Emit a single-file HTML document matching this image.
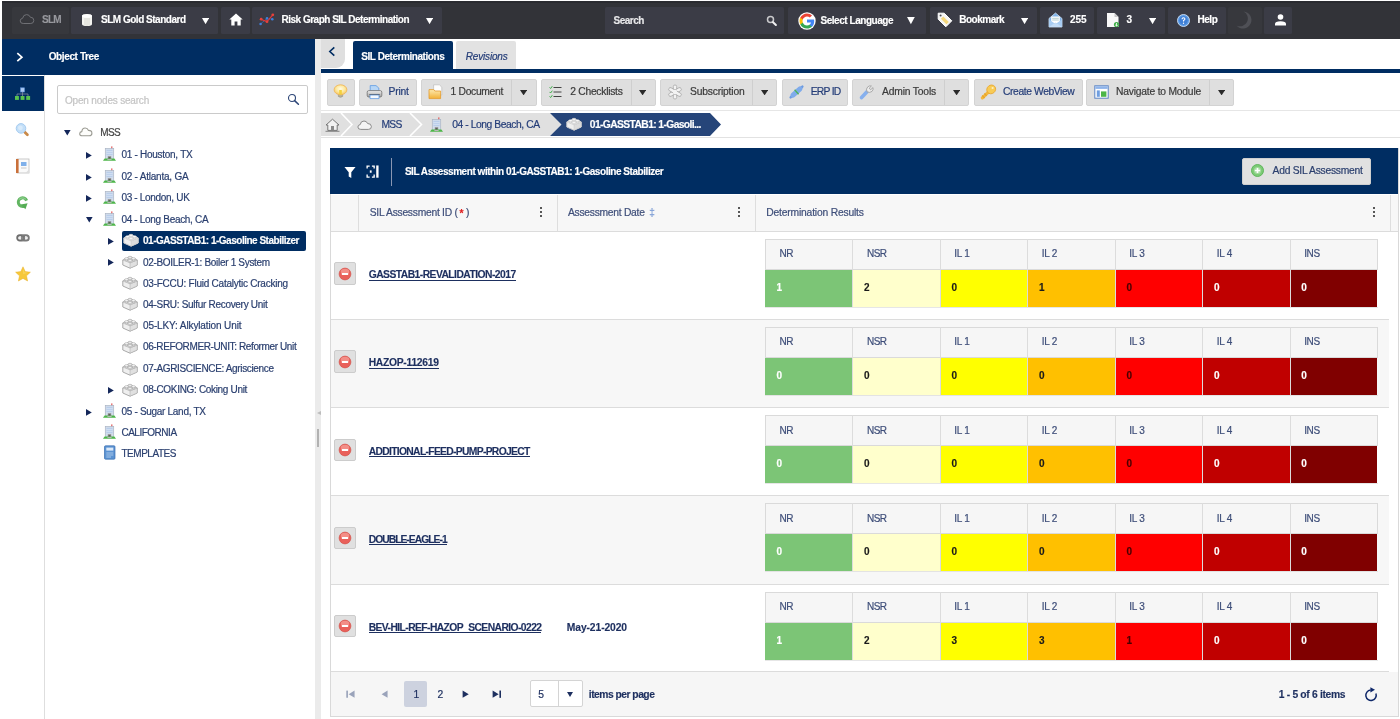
<!DOCTYPE html>
<html lang="en"><head><meta charset="utf-8"><title>SLM - Risk Graph SIL Determination</title>
<style>

*{box-sizing:border-box;margin:0;padding:0}
html,body{width:1400px;height:719px;overflow:hidden;background:#fff}
body{position:relative;font-family:"Liberation Sans",Arial,sans-serif;font-size:10px;color:#1d2f5f;letter-spacing:-0.3px}
.abs{position:absolute}
.t{position:absolute;white-space:nowrap;line-height:16px;height:16px;-webkit-text-stroke:0.2px currentColor}
.t.b{-webkit-text-stroke:0.15px currentColor}
#app{position:absolute;left:0;top:0;width:1400px;height:719px;will-change:transform;transform:translateZ(0)}
.topbar{position:absolute;left:0;top:0;width:1400px;height:39px;background:#323338}
.nb{position:absolute;top:7px;height:27px;background:#3b3c46;border-radius:1.5px}
.tri{position:absolute;width:0;height:0;border-left:4px solid transparent;border-right:4px solid transparent;border-top:6px solid #fff}
.tb{position:absolute;top:79px;height:27px;background:#dfdfdf;border:1px solid #d3d3d3;border-radius:2px}
.tbd{position:absolute;top:80px;height:25px;width:1px;background:#cfcfcf}
.dtri{position:absolute;width:0;height:0;border-left:3.5px solid transparent;border-right:3.5px solid transparent;border-top:5px solid #222}

</style></head>
<body>
<div id="app">
<div class="topbar">
<div class="abs" style="left:0;top:0;width:1400px;height:1px;background:#fff"></div><div class="abs" style="left:0;top:1px;width:1400px;height:1.5px;background:#2a2b30"></div><div class="abs" style="left:0;top:0;width:1.5px;height:39px;background:#fff"></div>
<div class="nb" style="left:12px;width:57px;background:#37383d;"></div>
<svg class="abs" style="left:19px;top:12px" width="17" height="14" viewBox="0 0 17 14"><path d="M4.2 11.5 Q1.2 11.5 1.2 8.9 Q1.2 6.6 3.6 6.3 Q4.2 2.6 7.6 2.6 Q10.4 2.6 11.3 5.2 Q14.8 5.2 14.8 8.4 Q14.8 11.5 11.8 11.5 Z" fill="none" stroke="#6f7075" stroke-width="1"/></svg>
<span class="t b" style="left:42px;top:12.4px;font-size:10px;letter-spacing:-0.703px;font-weight:bold;color:#97989d;">SLM</span>
<div class="nb" style="left:71px;width:147px;"></div>
<svg class="abs" style="left:81px;top:13px" width="12" height="14" viewBox="0 0 12 14"><path d="M1 3 Q1 1 6 1 Q11 1 11 3 V11 Q11 13 6 13 Q1 13 1 11 Z" fill="#f4f4f0"/><ellipse cx="6" cy="3" rx="5" ry="1.8" fill="#ffffff"/><path d="M4 5V12.6M6 5V13M8 5V12.6" stroke="#d0d0c8" stroke-width="0.8"/></svg>
<span class="t b" style="left:101px;top:12.4px;font-size:10px;letter-spacing:-0.487px;font-weight:bold;color:#ffffff;">SLM Gold Standard</span>
<svg class="abs" style="left:201.9px;top:17.5px" width="7.1" height="6.2" viewBox="0 0 7.1 6.2"><path d="M0 0 H7.1 L3.55 6.2 Z" fill="#fff"/></svg>
<div class="nb" style="left:221px;width:29px;"></div>
<svg class="abs" style="left:229px;top:13px" width="14" height="13" viewBox="0 0 14 13"><path d="M7 0.5 L0.3 6.6 H2.3 V12.5 H5.6 V8.5 H8.4 V12.5 H11.7 V6.6 H13.7 Z" fill="#fff"/></svg>
<div class="nb" style="left:252px;width:190px;"></div>
<svg class="abs" style="left:259px;top:13px" width="16" height="13" viewBox="0 0 16 13"><path d="M1.5 11 L8 5.5 L13.5 6.2" fill="none" stroke="#3d7fd9" stroke-width="1" stroke-dasharray="1.5 1.1"/><path d="M0.9 6 L8 8.6 L14 1.6" fill="none" stroke="#e0353a" stroke-width="1.2"/><circle cx="1.6" cy="11" r="1.3" fill="#3d7fd9"/><circle cx="8" cy="5.4" r="1.3" fill="#3d7fd9"/><circle cx="13.3" cy="6.3" r="1.3" fill="#3d7fd9"/><circle cx="2.2" cy="6.2" r="1.4" fill="#e8413a"/><circle cx="8" cy="8.7" r="1.4" fill="#e8413a"/><circle cx="13.8" cy="1.8" r="1.4" fill="#e8413a"/></svg>
<span class="t b" style="left:281.5px;top:12.4px;font-size:10px;letter-spacing:-0.5px;font-weight:bold;color:#ffffff;">Risk Graph SIL Determination</span>
<svg class="abs" style="left:426px;top:17.5px" width="7.1" height="6.2" viewBox="0 0 7.1 6.2"><path d="M0 0 H7.1 L3.55 6.2 Z" fill="#fff"/></svg>
<div class="nb" style="left:605px;width:179px;"></div>
<span class="t b" style="left:613.5px;top:12.8px;font-size:10px;letter-spacing:-0.476px;font-weight:bold;color:#e8e8ea;">Search</span>
<svg class="abs" style="left:766px;top:14.6px" width="12" height="12" viewBox="0 0 12 12"><circle cx="4.5" cy="4.6" r="3" fill="none" stroke="#c9c9cb" stroke-width="1.5"/><path d="M7 7.2 L9.9 10" stroke="#f0f0f0" stroke-width="2" stroke-linecap="round"/></svg>
<div class="nb" style="left:788px;width:138px;"></div>
<svg class="abs" style="left:798px;top:12px" width="18" height="18" viewBox="0 0 18 18"><circle cx="9" cy="9" r="8.7" fill="#fff"/><g transform="translate(9 9) scale(1.28) translate(-9 -9.05)"><path d="M14.6 9.15c0-.42-.04-.82-.1-1.2H9v2.3h3.15c-.14.73-.55 1.35-1.17 1.77v1.47h1.9c1.1-1.02 1.72-2.52 1.72-4.34z" fill="#4285F4"/><path d="M9 14.9c1.58 0 2.9-.52 3.87-1.42l-1.9-1.47c-.52.35-1.2.56-1.97.56-1.52 0-2.8-1.03-3.27-2.4H3.78v1.52C4.74 13.6 6.72 14.9 9 14.9z" fill="#34A853"/><path d="M5.73 10.17c-.12-.35-.18-.73-.18-1.12s.07-.77.18-1.12V6.4H3.78C3.38 7.2 3.15 8.1 3.15 9.05s.23 1.85.63 2.64l1.95-1.52z" fill="#FBBC05"/><path d="M9 5.52c.86 0 1.63.3 2.24.88l1.68-1.68C11.9 3.77 10.58 3.2 9 3.2c-2.28 0-4.26 1.3-5.22 3.2l1.95 1.52C6.2 6.55 7.48 5.52 9 5.52z" fill="#EA4335"/></g></svg>
<span class="t b" style="left:820.5px;top:12.8px;font-size:10px;letter-spacing:-0.464px;font-weight:bold;color:#ffffff;">Select Language</span>
<svg class="abs" style="left:907px;top:17.3px" width="7.8" height="7.3" viewBox="0 0 7.8 7.3"><path d="M0 0 H7.8 L3.9 7.3 Z" fill="#fff"/></svg>
<div class="nb" style="left:930px;width:107px;"></div>
<svg class="abs" style="left:937px;top:11.5px" width="16" height="16" viewBox="0 0 16 16"><path d="M1.2 1.2 H7.2 L14.8 8.8 L8.8 14.8 L1.2 7.2 Z" fill="#f6f6f4" stroke="#ffffff" stroke-width="1" stroke-linejoin="round"/><path d="M6.3 4.4 L11.8 9.9 L9.4 12.3 L3.9 6.8 Z" fill="#f4d77c"/><circle cx="3.6" cy="3.6" r="1" fill="#4a4b52"/></svg>
<span class="t b" style="left:959.2px;top:12.4px;font-size:10px;letter-spacing:-0.488px;font-weight:bold;color:#ffffff;">Bookmark</span>
<svg class="abs" style="left:1021.3px;top:17.5px" width="7.1" height="6.2" viewBox="0 0 7.1 6.2"><path d="M0 0 H7.1 L3.55 6.2 Z" fill="#fff"/></svg>
<div class="nb" style="left:1040px;width:54px;"></div>
<svg class="abs" style="left:1048px;top:12px" width="15" height="16" viewBox="0 0 15 16"><path d="M1 6.5 L7.5 1 L14 6.5 V15 H1 Z" fill="#7fb2e8" stroke="#cfe3f8" stroke-width="0.8"/><rect x="3.2" y="4.5" width="8.6" height="6.5" fill="#fff"/><path d="M4.2 6.3H10.8M4.2 8H10.8" stroke="#9bb" stroke-width="0.7"/><path d="M1 7.5 L7.5 12 L14 7.5 V15 H1 Z" fill="#a9cdf3"/><path d="M1 15 L7.5 10.5 L14 15" fill="#c3dcf7"/></svg>
<span class="t b" style="left:1070px;top:12.4px;font-size:10px;letter-spacing:-0.061px;font-weight:bold;color:#ffffff;">255</span>
<div class="nb" style="left:1097px;width:68px;"></div>
<svg class="abs" style="left:1106px;top:12px" width="14" height="16" viewBox="0 0 14 16"><path d="M1 1 H8.5 L12.5 5 V15 H1 Z" fill="#f8f8f8"/><path d="M8.5 1 V5 H12.5 Z" fill="#c8c8c8"/><circle cx="10.5" cy="12.5" r="2.6" fill="#3fae49"/><path d="M10.5 11V14M9.2 12.8 L10.5 14.1 L11.8 12.8" stroke="#fff" stroke-width="0.8" fill="none"/></svg>
<span class="t b" style="left:1126.5px;top:12.4px;font-size:10px;font-weight:bold;color:#ffffff;">3</span>
<svg class="abs" style="left:1148.8px;top:17.5px" width="7.1" height="6.2" viewBox="0 0 7.1 6.2"><path d="M0 0 H7.1 L3.55 6.2 Z" fill="#fff"/></svg>
<div class="nb" style="left:1168px;width:58px;"></div>
<svg class="abs" style="left:1177px;top:13.5px" width="13" height="13" viewBox="0 0 13 13"><circle cx="6.5" cy="6.5" r="6" fill="#5b9be6" stroke="#cfe2f8" stroke-width="0.9"/><circle cx="6.5" cy="6.5" r="4.2" fill="#3f7fd6"/><path d="M5.1 5.3 Q5.1 3.7 6.5 3.7 Q7.9 3.7 7.9 5 Q7.9 5.8 6.5 6.6 V7.5" fill="none" stroke="#fff" stroke-width="1.1"/><circle cx="6.5" cy="9.2" r="0.7" fill="#fff"/></svg>
<span class="t b" style="left:1197.5px;top:12.4px;font-size:10px;letter-spacing:-0.467px;font-weight:bold;color:#ffffff;">Help</span>
<div class="nb" style="left:1228px;width:34px;background:#37383d;"></div>
<svg class="abs" style="left:1234px;top:10px" width="20" height="20" viewBox="0 0 20 20"><path d="M9.5 1.5 A8.5 8.5 0 1 1 2.5 15.5 A7.5 7.5 0 0 0 9.5 1.5 Z" fill="#4f5056"/></svg>
<div class="nb" style="left:1264px;width:28px;"></div>
<svg class="abs" style="left:1274px;top:14px" width="13" height="12" viewBox="0 0 13 12"><circle cx="6.5" cy="3" r="2.8" fill="#fff"/><path d="M1 11.5 V9.8 Q1 7.3 6.5 7.3 Q12 7.3 12 9.8 V11.5 Z" fill="#fff"/></svg>
</div>
<div class="abs" style="left:0;top:39px;width:315px;height:35.5px;background:#002d62"></div>
<svg class="abs" style="left:15.6px;top:52px" width="8" height="11" viewBox="0 0 8 11"><path d="M1.3 1.2 L5.9 5.2 L1.3 9.2" fill="none" stroke="#fff" stroke-width="1.7"/></svg>
<span class="t b" style="left:48.7px;top:49px;font-size:10px;letter-spacing:-0.379px;font-weight:bold;color:#fff;">Object Tree</span>
<div class="abs" style="left:44px;top:75px;width:1px;height:644px;background:#dedede"></div>
<div class="abs" style="left:1.5px;top:76.2px;width:42.5px;height:35.3px;background:#002d62"></div>
<div class="abs" style="left:315px;top:39px;width:6px;height:680px;background:#ebebeb"></div>
<div class="abs" style="left:317px;top:429px;width:2px;height:18px;background:#b2b2b2"></div>
<div class="abs" style="left:316.5px;top:411.4px;width:0;height:0;border-top:2.5px solid transparent;border-bottom:2.5px solid transparent;border-right:4px solid #bdbdbd"></div>
<div class="abs" style="left:57px;top:85px;width:250.5px;height:29px;border:1px solid #cacaca;border-radius:2px;background:#fff"></div>
<span class="t" style="left:65px;top:92.5px;font-size:10px;letter-spacing:-0.193px;color:#c4c4c4;">Open nodes search</span>
<svg class="abs" style="left:287.3px;top:92.5px" width="13" height="13" viewBox="0 0 13 13"><circle cx="5" cy="5" r="3.5" fill="none" stroke="#2d4677" stroke-width="1.1"/><path d="M7.6 7.6 L11.4 11.3" stroke="#2d4677" stroke-width="1.5" stroke-linecap="round"/></svg>
<svg class="abs" style="left:14px;top:87px" width="17" height="14" viewBox="0 0 17 14"><rect x="6.5" y="0.8" width="4" height="4.2" fill="#a9c8f2" stroke="#5d8fd8" stroke-width="0.6"/><path d="M8.5 5V7M3 9V7H14V9M8.5 7V9" stroke="#8d93a6" stroke-width="0.7" fill="none"/><rect x="1" y="9" width="3.9" height="3.9" fill="#58c24f"/><rect x="6.6" y="9" width="3.9" height="3.9" fill="#58c24f"/><rect x="12.2" y="9" width="3.9" height="3.9" fill="#58c24f"/></svg>
<svg class="abs" style="left:15px;top:122px" width="15" height="15" viewBox="0 0 15 15"><path d="M9.6 10 L12.4 12.8" stroke="#c98a4a" stroke-width="2.8" stroke-linecap="round"/><circle cx="6" cy="6.4" r="4.8" fill="#c3dff8" stroke="#a5cbf0" stroke-width="1"/><circle cx="5.4" cy="5.8" r="2.4" fill="#d9ebfb"/></svg>
<svg class="abs" style="left:15px;top:158px" width="15" height="16" viewBox="0 0 15 16"><rect x="2" y="1" width="12" height="14" fill="#fafafa" stroke="#bdbdbd" stroke-width="0.8"/><rect x="1" y="1" width="2.6" height="14" fill="#c9703a"/><rect x="6" y="4" width="5.5" height="4" fill="#7fb0ea"/><path d="M6 10H11.5" stroke="#bbb" stroke-width="0.8"/><path d="M10.5 15 L14 11.5 V15Z" fill="#ddd"/></svg>
<svg class="abs" style="left:15px;top:195px" width="15" height="15" viewBox="0 0 15 15"><path d="M11.6 5.6 A4.3 4.3 0 1 0 9.2 11.2" fill="none" stroke="#62b562" stroke-width="3.1"/><path d="M5.8 9.4 L10.4 14.2 L12.6 8.2 Z" fill="#55ad55"/><path d="M10.8 4.4 A4.3 4.3 0 0 0 4 4.6" fill="none" stroke="#8ccf8c" stroke-width="1.2"/></svg>
<svg class="abs" style="left:15.6px;top:232.5px" width="14" height="10" viewBox="0 0 14 10"><rect x="1.2" y="2.3" width="7" height="5.2" rx="2.6" fill="none" stroke="#6e6e6e" stroke-width="1.9"/><rect x="5.8" y="2.3" width="7" height="5.2" rx="2.6" fill="none" stroke="#7a7a7a" stroke-width="1.9"/><path d="M3 4.9H5.4M8.6 4.9H11" stroke="#d8d8d8" stroke-width="0.8"/></svg>
<svg class="abs" style="left:14.8px;top:265.6px" width="16" height="16" viewBox="0 0 16 16"><path d="M8 0.8 L10.2 5.6 L15.4 6.2 L11.5 9.8 L12.6 15 L8 12.4 L3.4 15 L4.5 9.8 L0.6 6.2 L5.8 5.6 Z" fill="#f6c83a" stroke="#e9b02a" stroke-width="0.5"/><path d="M8 2.6 L9.5 6.3 L13 6.8 L8 8.2 Z" fill="#f9d765" opacity="0.7"/></svg>
<svg class="abs" style="left:64px;top:130.4px" width="7" height="6" viewBox="0 0 7 6"><path d="M0 0 H6.6 L3.3 5.6 Z" fill="#14275a"/></svg>
<svg class="abs" style="left:79.4px;top:127.4px" width="14" height="10" viewBox="0 0 14 10"><path d="M3.3 8.8 Q0.7 8.8 0.7 6.7 Q0.7 4.9 2.8 4.6 Q3.2 1 6.2 1 Q8.6 1 9.4 3.4 Q12.9 3.3 12.9 6.2 Q12.9 8.8 10.2 8.8 Z" fill="#fdfdfb" stroke="#9b9b93" stroke-width="1.1"/></svg>
<span class="t" style="left:100.2px;top:125px;font-size:10px;letter-spacing:-0.623px;color:#444;">MSS</span>
<svg class="abs" style="left:86px;top:151.89999999999998px" width="6" height="7" viewBox="0 0 6 7"><path d="M0 0 V6.8 L5.8 3.4 Z" fill="#14275a"/></svg>
<svg class="abs" style="left:103px;top:146.2px" width="13" height="15" viewBox="0 0 13 15"><rect x="8.2" y="0.4" width="1.2" height="2.4" fill="#e25a5a"/><rect x="2.3" y="2.6" width="8.4" height="11" fill="#d3deec" stroke="#a9b4c4" stroke-width="0.7"/><rect x="3.4" y="3.8" width="6.2" height="5.4" fill="#b9cdea"/><path d="M3.4 5.6H9.6M3.4 7.4H9.6" stroke="#e4ecf7" stroke-width="0.6"/><rect x="4.8" y="10.2" width="3.4" height="3.2" fill="#8d8d8d"/><rect x="5.6" y="11" width="1.8" height="2.4" fill="#5f5f5f"/><path d="M0 14.8 L1.6 12.4 H11.4 L13 14.8 Z" fill="#4cb648"/><rect x="4.4" y="12.9" width="4.2" height="1.2" fill="#b8b8b8"/></svg>
<span class="t" style="left:121.4px;top:147.2px;font-size:10px;letter-spacing:-0.275px;color:#2a3f6f;">01 - Houston, TX</span>
<svg class="abs" style="left:86px;top:173.7px" width="6" height="7" viewBox="0 0 6 7"><path d="M0 0 V6.8 L5.8 3.4 Z" fill="#14275a"/></svg>
<svg class="abs" style="left:103px;top:168px" width="13" height="15" viewBox="0 0 13 15"><rect x="8.2" y="0.4" width="1.2" height="2.4" fill="#e25a5a"/><rect x="2.3" y="2.6" width="8.4" height="11" fill="#d3deec" stroke="#a9b4c4" stroke-width="0.7"/><rect x="3.4" y="3.8" width="6.2" height="5.4" fill="#b9cdea"/><path d="M3.4 5.6H9.6M3.4 7.4H9.6" stroke="#e4ecf7" stroke-width="0.6"/><rect x="4.8" y="10.2" width="3.4" height="3.2" fill="#8d8d8d"/><rect x="5.6" y="11" width="1.8" height="2.4" fill="#5f5f5f"/><path d="M0 14.8 L1.6 12.4 H11.4 L13 14.8 Z" fill="#4cb648"/><rect x="4.4" y="12.9" width="4.2" height="1.2" fill="#b8b8b8"/></svg>
<span class="t" style="left:121.4px;top:169px;font-size:10px;letter-spacing:-0.225px;color:#2a3f6f;">02 - Atlanta, GA</span>
<svg class="abs" style="left:86px;top:194.79999999999998px" width="6" height="7" viewBox="0 0 6 7"><path d="M0 0 V6.8 L5.8 3.4 Z" fill="#14275a"/></svg>
<svg class="abs" style="left:103px;top:189.1px" width="13" height="15" viewBox="0 0 13 15"><rect x="8.2" y="0.4" width="1.2" height="2.4" fill="#e25a5a"/><rect x="2.3" y="2.6" width="8.4" height="11" fill="#d3deec" stroke="#a9b4c4" stroke-width="0.7"/><rect x="3.4" y="3.8" width="6.2" height="5.4" fill="#b9cdea"/><path d="M3.4 5.6H9.6M3.4 7.4H9.6" stroke="#e4ecf7" stroke-width="0.6"/><rect x="4.8" y="10.2" width="3.4" height="3.2" fill="#8d8d8d"/><rect x="5.6" y="11" width="1.8" height="2.4" fill="#5f5f5f"/><path d="M0 14.8 L1.6 12.4 H11.4 L13 14.8 Z" fill="#4cb648"/><rect x="4.4" y="12.9" width="4.2" height="1.2" fill="#b8b8b8"/></svg>
<span class="t" style="left:121.4px;top:190.1px;font-size:10px;letter-spacing:-0.315px;color:#2a3f6f;">03 - London, UK</span>
<svg class="abs" style="left:86px;top:217.20000000000002px" width="7" height="6" viewBox="0 0 7 6"><path d="M0 0 H6.6 L3.3 5.6 Z" fill="#14275a"/></svg>
<svg class="abs" style="left:103px;top:210.8px" width="13" height="15" viewBox="0 0 13 15"><rect x="8.2" y="0.4" width="1.2" height="2.4" fill="#e25a5a"/><rect x="2.3" y="2.6" width="8.4" height="11" fill="#d3deec" stroke="#a9b4c4" stroke-width="0.7"/><rect x="3.4" y="3.8" width="6.2" height="5.4" fill="#b9cdea"/><path d="M3.4 5.6H9.6M3.4 7.4H9.6" stroke="#e4ecf7" stroke-width="0.6"/><rect x="4.8" y="10.2" width="3.4" height="3.2" fill="#8d8d8d"/><rect x="5.6" y="11" width="1.8" height="2.4" fill="#5f5f5f"/><path d="M0 14.8 L1.6 12.4 H11.4 L13 14.8 Z" fill="#4cb648"/><rect x="4.4" y="12.9" width="4.2" height="1.2" fill="#b8b8b8"/></svg>
<span class="t" style="left:121.4px;top:211.8px;font-size:10px;letter-spacing:-0.312px;color:#2a3f6f;">04 - Long Beach, CA</span>
<div class="abs" style="left:122px;top:230.5px;width:184px;height:20.5px;background:#002d62;border-radius:2px"></div>
<svg class="abs" style="left:108px;top:237.6px" width="6" height="7" viewBox="0 0 6 7"><path d="M0 0 V6.8 L5.8 3.4 Z" fill="#14275a"/></svg>
<svg class="abs" style="left:123.3px;top:233.3px" width="16" height="14" viewBox="0 0 16 14"><path d="M0.8 5 L8 2.2 L15.2 5 V10 L8 13.2 L0.8 10 Z" fill="#efefef" stroke="#c9c9c9" stroke-width="1" stroke-linejoin="round"/><path d="M8 7.8 V13.2 L15.2 10 V5 Z" fill="#dcdcdc" stroke="#c9c9c9" stroke-width="0.5"/><path d="M0.8 5 L8 2.2 L15.2 5 L8 7.8 Z" fill="#ffffff" stroke="#c9c9c9" stroke-width="0.6"/><path d="M6 2.3 V3.4 A2 1 0 0 0 10 3.4 V2.3 Z" fill="#efefef" stroke="#c9c9c9" stroke-width="0.7"/><ellipse cx="8" cy="2.3" rx="2" ry="1" fill="#ffffff" stroke="#c9c9c9" stroke-width="0.7"/><path d="M2.5999999999999996 3.7 V4.800000000000001 A2 1 0 0 0 6.6 4.800000000000001 V3.7 Z" fill="#efefef" stroke="#c9c9c9" stroke-width="0.7"/><ellipse cx="4.6" cy="3.7" rx="2" ry="1" fill="#ffffff" stroke="#c9c9c9" stroke-width="0.7"/><path d="M9.4 3.7 V4.800000000000001 A2 1 0 0 0 13.4 4.800000000000001 V3.7 Z" fill="#efefef" stroke="#c9c9c9" stroke-width="0.7"/><ellipse cx="11.4" cy="3.7" rx="2" ry="1" fill="#ffffff" stroke="#c9c9c9" stroke-width="0.7"/><path d="M6 5.3 V6.4 A2 1 0 0 0 10 6.4 V5.3 Z" fill="#efefef" stroke="#c9c9c9" stroke-width="0.7"/><ellipse cx="8" cy="5.3" rx="2" ry="1" fill="#ffffff" stroke="#c9c9c9" stroke-width="0.7"/></svg>
<span class="t b" style="left:143px;top:232.9px;font-size:10px;letter-spacing:-0.489px;font-weight:bold;color:#fff;">01-GASSTAB1: 1-Gasoline Stabilizer</span>
<svg class="abs" style="left:108px;top:259.2px" width="6" height="7" viewBox="0 0 6 7"><path d="M0 0 V6.8 L5.8 3.4 Z" fill="#14275a"/></svg>
<svg class="abs" style="left:122.3px;top:254.9px" width="16" height="14" viewBox="0 0 16 14"><path d="M0.8 5 L8 2.2 L15.2 5 V10 L8 13.2 L0.8 10 Z" fill="#efefef" stroke="#a9a9a9" stroke-width="1" stroke-linejoin="round"/><path d="M8 7.8 V13.2 L15.2 10 V5 Z" fill="#e0e0e0" stroke="#a9a9a9" stroke-width="0.5"/><path d="M0.8 5 L8 2.2 L15.2 5 L8 7.8 Z" fill="#fbfbfb" stroke="#a9a9a9" stroke-width="0.6"/><path d="M6 2.3 V3.4 A2 1 0 0 0 10 3.4 V2.3 Z" fill="#efefef" stroke="#a9a9a9" stroke-width="0.7"/><ellipse cx="8" cy="2.3" rx="2" ry="1" fill="#fbfbfb" stroke="#a9a9a9" stroke-width="0.7"/><path d="M2.5999999999999996 3.7 V4.800000000000001 A2 1 0 0 0 6.6 4.800000000000001 V3.7 Z" fill="#efefef" stroke="#a9a9a9" stroke-width="0.7"/><ellipse cx="4.6" cy="3.7" rx="2" ry="1" fill="#fbfbfb" stroke="#a9a9a9" stroke-width="0.7"/><path d="M9.4 3.7 V4.800000000000001 A2 1 0 0 0 13.4 4.800000000000001 V3.7 Z" fill="#efefef" stroke="#a9a9a9" stroke-width="0.7"/><ellipse cx="11.4" cy="3.7" rx="2" ry="1" fill="#fbfbfb" stroke="#a9a9a9" stroke-width="0.7"/><path d="M6 5.3 V6.4 A2 1 0 0 0 10 6.4 V5.3 Z" fill="#efefef" stroke="#a9a9a9" stroke-width="0.7"/><ellipse cx="8" cy="5.3" rx="2" ry="1" fill="#fbfbfb" stroke="#a9a9a9" stroke-width="0.7"/></svg>
<span class="t" style="left:143px;top:254.5px;font-size:10px;letter-spacing:-0.314px;color:#2a3f6f;">02-BOILER-1: Boiler 1 System</span>
<svg class="abs" style="left:122.3px;top:275.9px" width="16" height="14" viewBox="0 0 16 14"><path d="M0.8 5 L8 2.2 L15.2 5 V10 L8 13.2 L0.8 10 Z" fill="#efefef" stroke="#a9a9a9" stroke-width="1" stroke-linejoin="round"/><path d="M8 7.8 V13.2 L15.2 10 V5 Z" fill="#e0e0e0" stroke="#a9a9a9" stroke-width="0.5"/><path d="M0.8 5 L8 2.2 L15.2 5 L8 7.8 Z" fill="#fbfbfb" stroke="#a9a9a9" stroke-width="0.6"/><path d="M6 2.3 V3.4 A2 1 0 0 0 10 3.4 V2.3 Z" fill="#efefef" stroke="#a9a9a9" stroke-width="0.7"/><ellipse cx="8" cy="2.3" rx="2" ry="1" fill="#fbfbfb" stroke="#a9a9a9" stroke-width="0.7"/><path d="M2.5999999999999996 3.7 V4.800000000000001 A2 1 0 0 0 6.6 4.800000000000001 V3.7 Z" fill="#efefef" stroke="#a9a9a9" stroke-width="0.7"/><ellipse cx="4.6" cy="3.7" rx="2" ry="1" fill="#fbfbfb" stroke="#a9a9a9" stroke-width="0.7"/><path d="M9.4 3.7 V4.800000000000001 A2 1 0 0 0 13.4 4.800000000000001 V3.7 Z" fill="#efefef" stroke="#a9a9a9" stroke-width="0.7"/><ellipse cx="11.4" cy="3.7" rx="2" ry="1" fill="#fbfbfb" stroke="#a9a9a9" stroke-width="0.7"/><path d="M6 5.3 V6.4 A2 1 0 0 0 10 6.4 V5.3 Z" fill="#efefef" stroke="#a9a9a9" stroke-width="0.7"/><ellipse cx="8" cy="5.3" rx="2" ry="1" fill="#fbfbfb" stroke="#a9a9a9" stroke-width="0.7"/></svg>
<span class="t" style="left:143px;top:275.5px;font-size:10px;letter-spacing:-0.243px;color:#2a3f6f;">03-FCCU: Fluid Catalytic Cracking</span>
<svg class="abs" style="left:122.3px;top:297.4px" width="16" height="14" viewBox="0 0 16 14"><path d="M0.8 5 L8 2.2 L15.2 5 V10 L8 13.2 L0.8 10 Z" fill="#efefef" stroke="#a9a9a9" stroke-width="1" stroke-linejoin="round"/><path d="M8 7.8 V13.2 L15.2 10 V5 Z" fill="#e0e0e0" stroke="#a9a9a9" stroke-width="0.5"/><path d="M0.8 5 L8 2.2 L15.2 5 L8 7.8 Z" fill="#fbfbfb" stroke="#a9a9a9" stroke-width="0.6"/><path d="M6 2.3 V3.4 A2 1 0 0 0 10 3.4 V2.3 Z" fill="#efefef" stroke="#a9a9a9" stroke-width="0.7"/><ellipse cx="8" cy="2.3" rx="2" ry="1" fill="#fbfbfb" stroke="#a9a9a9" stroke-width="0.7"/><path d="M2.5999999999999996 3.7 V4.800000000000001 A2 1 0 0 0 6.6 4.800000000000001 V3.7 Z" fill="#efefef" stroke="#a9a9a9" stroke-width="0.7"/><ellipse cx="4.6" cy="3.7" rx="2" ry="1" fill="#fbfbfb" stroke="#a9a9a9" stroke-width="0.7"/><path d="M9.4 3.7 V4.800000000000001 A2 1 0 0 0 13.4 4.800000000000001 V3.7 Z" fill="#efefef" stroke="#a9a9a9" stroke-width="0.7"/><ellipse cx="11.4" cy="3.7" rx="2" ry="1" fill="#fbfbfb" stroke="#a9a9a9" stroke-width="0.7"/><path d="M6 5.3 V6.4 A2 1 0 0 0 10 6.4 V5.3 Z" fill="#efefef" stroke="#a9a9a9" stroke-width="0.7"/><ellipse cx="8" cy="5.3" rx="2" ry="1" fill="#fbfbfb" stroke="#a9a9a9" stroke-width="0.7"/></svg>
<span class="t" style="left:143px;top:297px;font-size:10px;letter-spacing:-0.301px;color:#2a3f6f;">04-SRU: Sulfur Recovery Unit</span>
<svg class="abs" style="left:122.3px;top:318.4px" width="16" height="14" viewBox="0 0 16 14"><path d="M0.8 5 L8 2.2 L15.2 5 V10 L8 13.2 L0.8 10 Z" fill="#efefef" stroke="#a9a9a9" stroke-width="1" stroke-linejoin="round"/><path d="M8 7.8 V13.2 L15.2 10 V5 Z" fill="#e0e0e0" stroke="#a9a9a9" stroke-width="0.5"/><path d="M0.8 5 L8 2.2 L15.2 5 L8 7.8 Z" fill="#fbfbfb" stroke="#a9a9a9" stroke-width="0.6"/><path d="M6 2.3 V3.4 A2 1 0 0 0 10 3.4 V2.3 Z" fill="#efefef" stroke="#a9a9a9" stroke-width="0.7"/><ellipse cx="8" cy="2.3" rx="2" ry="1" fill="#fbfbfb" stroke="#a9a9a9" stroke-width="0.7"/><path d="M2.5999999999999996 3.7 V4.800000000000001 A2 1 0 0 0 6.6 4.800000000000001 V3.7 Z" fill="#efefef" stroke="#a9a9a9" stroke-width="0.7"/><ellipse cx="4.6" cy="3.7" rx="2" ry="1" fill="#fbfbfb" stroke="#a9a9a9" stroke-width="0.7"/><path d="M9.4 3.7 V4.800000000000001 A2 1 0 0 0 13.4 4.800000000000001 V3.7 Z" fill="#efefef" stroke="#a9a9a9" stroke-width="0.7"/><ellipse cx="11.4" cy="3.7" rx="2" ry="1" fill="#fbfbfb" stroke="#a9a9a9" stroke-width="0.7"/><path d="M6 5.3 V6.4 A2 1 0 0 0 10 6.4 V5.3 Z" fill="#efefef" stroke="#a9a9a9" stroke-width="0.7"/><ellipse cx="8" cy="5.3" rx="2" ry="1" fill="#fbfbfb" stroke="#a9a9a9" stroke-width="0.7"/></svg>
<span class="t" style="left:143px;top:318px;font-size:10px;letter-spacing:-0.12px;color:#2a3f6f;">05-LKY: Alkylation Unit</span>
<svg class="abs" style="left:122.3px;top:339.7px" width="16" height="14" viewBox="0 0 16 14"><path d="M0.8 5 L8 2.2 L15.2 5 V10 L8 13.2 L0.8 10 Z" fill="#efefef" stroke="#a9a9a9" stroke-width="1" stroke-linejoin="round"/><path d="M8 7.8 V13.2 L15.2 10 V5 Z" fill="#e0e0e0" stroke="#a9a9a9" stroke-width="0.5"/><path d="M0.8 5 L8 2.2 L15.2 5 L8 7.8 Z" fill="#fbfbfb" stroke="#a9a9a9" stroke-width="0.6"/><path d="M6 2.3 V3.4 A2 1 0 0 0 10 3.4 V2.3 Z" fill="#efefef" stroke="#a9a9a9" stroke-width="0.7"/><ellipse cx="8" cy="2.3" rx="2" ry="1" fill="#fbfbfb" stroke="#a9a9a9" stroke-width="0.7"/><path d="M2.5999999999999996 3.7 V4.800000000000001 A2 1 0 0 0 6.6 4.800000000000001 V3.7 Z" fill="#efefef" stroke="#a9a9a9" stroke-width="0.7"/><ellipse cx="4.6" cy="3.7" rx="2" ry="1" fill="#fbfbfb" stroke="#a9a9a9" stroke-width="0.7"/><path d="M9.4 3.7 V4.800000000000001 A2 1 0 0 0 13.4 4.800000000000001 V3.7 Z" fill="#efefef" stroke="#a9a9a9" stroke-width="0.7"/><ellipse cx="11.4" cy="3.7" rx="2" ry="1" fill="#fbfbfb" stroke="#a9a9a9" stroke-width="0.7"/><path d="M6 5.3 V6.4 A2 1 0 0 0 10 6.4 V5.3 Z" fill="#efefef" stroke="#a9a9a9" stroke-width="0.7"/><ellipse cx="8" cy="5.3" rx="2" ry="1" fill="#fbfbfb" stroke="#a9a9a9" stroke-width="0.7"/></svg>
<span class="t" style="left:143px;top:339.3px;font-size:10px;letter-spacing:-0.378px;color:#2a3f6f;">06-REFORMER-UNIT: Reformer Unit</span>
<svg class="abs" style="left:122.3px;top:361.59999999999997px" width="16" height="14" viewBox="0 0 16 14"><path d="M0.8 5 L8 2.2 L15.2 5 V10 L8 13.2 L0.8 10 Z" fill="#efefef" stroke="#a9a9a9" stroke-width="1" stroke-linejoin="round"/><path d="M8 7.8 V13.2 L15.2 10 V5 Z" fill="#e0e0e0" stroke="#a9a9a9" stroke-width="0.5"/><path d="M0.8 5 L8 2.2 L15.2 5 L8 7.8 Z" fill="#fbfbfb" stroke="#a9a9a9" stroke-width="0.6"/><path d="M6 2.3 V3.4 A2 1 0 0 0 10 3.4 V2.3 Z" fill="#efefef" stroke="#a9a9a9" stroke-width="0.7"/><ellipse cx="8" cy="2.3" rx="2" ry="1" fill="#fbfbfb" stroke="#a9a9a9" stroke-width="0.7"/><path d="M2.5999999999999996 3.7 V4.800000000000001 A2 1 0 0 0 6.6 4.800000000000001 V3.7 Z" fill="#efefef" stroke="#a9a9a9" stroke-width="0.7"/><ellipse cx="4.6" cy="3.7" rx="2" ry="1" fill="#fbfbfb" stroke="#a9a9a9" stroke-width="0.7"/><path d="M9.4 3.7 V4.800000000000001 A2 1 0 0 0 13.4 4.800000000000001 V3.7 Z" fill="#efefef" stroke="#a9a9a9" stroke-width="0.7"/><ellipse cx="11.4" cy="3.7" rx="2" ry="1" fill="#fbfbfb" stroke="#a9a9a9" stroke-width="0.7"/><path d="M6 5.3 V6.4 A2 1 0 0 0 10 6.4 V5.3 Z" fill="#efefef" stroke="#a9a9a9" stroke-width="0.7"/><ellipse cx="8" cy="5.3" rx="2" ry="1" fill="#fbfbfb" stroke="#a9a9a9" stroke-width="0.7"/></svg>
<span class="t" style="left:143px;top:361.2px;font-size:10px;letter-spacing:-0.35px;color:#2a3f6f;">07-AGRISCIENCE: Agriscience</span>
<svg class="abs" style="left:108px;top:386.9px" width="6" height="7" viewBox="0 0 6 7"><path d="M0 0 V6.8 L5.8 3.4 Z" fill="#14275a"/></svg>
<svg class="abs" style="left:122.3px;top:382.59999999999997px" width="16" height="14" viewBox="0 0 16 14"><path d="M0.8 5 L8 2.2 L15.2 5 V10 L8 13.2 L0.8 10 Z" fill="#efefef" stroke="#a9a9a9" stroke-width="1" stroke-linejoin="round"/><path d="M8 7.8 V13.2 L15.2 10 V5 Z" fill="#e0e0e0" stroke="#a9a9a9" stroke-width="0.5"/><path d="M0.8 5 L8 2.2 L15.2 5 L8 7.8 Z" fill="#fbfbfb" stroke="#a9a9a9" stroke-width="0.6"/><path d="M6 2.3 V3.4 A2 1 0 0 0 10 3.4 V2.3 Z" fill="#efefef" stroke="#a9a9a9" stroke-width="0.7"/><ellipse cx="8" cy="2.3" rx="2" ry="1" fill="#fbfbfb" stroke="#a9a9a9" stroke-width="0.7"/><path d="M2.5999999999999996 3.7 V4.800000000000001 A2 1 0 0 0 6.6 4.800000000000001 V3.7 Z" fill="#efefef" stroke="#a9a9a9" stroke-width="0.7"/><ellipse cx="4.6" cy="3.7" rx="2" ry="1" fill="#fbfbfb" stroke="#a9a9a9" stroke-width="0.7"/><path d="M9.4 3.7 V4.800000000000001 A2 1 0 0 0 13.4 4.800000000000001 V3.7 Z" fill="#efefef" stroke="#a9a9a9" stroke-width="0.7"/><ellipse cx="11.4" cy="3.7" rx="2" ry="1" fill="#fbfbfb" stroke="#a9a9a9" stroke-width="0.7"/><path d="M6 5.3 V6.4 A2 1 0 0 0 10 6.4 V5.3 Z" fill="#efefef" stroke="#a9a9a9" stroke-width="0.7"/><ellipse cx="8" cy="5.3" rx="2" ry="1" fill="#fbfbfb" stroke="#a9a9a9" stroke-width="0.7"/></svg>
<span class="t" style="left:143px;top:382.2px;font-size:10px;letter-spacing:-0.325px;color:#2a3f6f;">08-COKING: Coking Unit</span>
<svg class="abs" style="left:86px;top:408.9px" width="6" height="7" viewBox="0 0 6 7"><path d="M0 0 V6.8 L5.8 3.4 Z" fill="#14275a"/></svg>
<svg class="abs" style="left:103px;top:403.2px" width="13" height="15" viewBox="0 0 13 15"><rect x="8.2" y="0.4" width="1.2" height="2.4" fill="#e25a5a"/><rect x="2.3" y="2.6" width="8.4" height="11" fill="#d3deec" stroke="#a9b4c4" stroke-width="0.7"/><rect x="3.4" y="3.8" width="6.2" height="5.4" fill="#b9cdea"/><path d="M3.4 5.6H9.6M3.4 7.4H9.6" stroke="#e4ecf7" stroke-width="0.6"/><rect x="4.8" y="10.2" width="3.4" height="3.2" fill="#8d8d8d"/><rect x="5.6" y="11" width="1.8" height="2.4" fill="#5f5f5f"/><path d="M0 14.8 L1.6 12.4 H11.4 L13 14.8 Z" fill="#4cb648"/><rect x="4.4" y="12.9" width="4.2" height="1.2" fill="#b8b8b8"/></svg>
<span class="t" style="left:121.4px;top:404.2px;font-size:10px;letter-spacing:-0.298px;color:#2a3f6f;">05 - Sugar Land, TX</span>
<svg class="abs" style="left:103px;top:424px" width="13" height="15" viewBox="0 0 13 15"><rect x="8.2" y="0.4" width="1.2" height="2.4" fill="#e25a5a"/><rect x="2.3" y="2.6" width="8.4" height="11" fill="#d3deec" stroke="#a9b4c4" stroke-width="0.7"/><rect x="3.4" y="3.8" width="6.2" height="5.4" fill="#b9cdea"/><path d="M3.4 5.6H9.6M3.4 7.4H9.6" stroke="#e4ecf7" stroke-width="0.6"/><rect x="4.8" y="10.2" width="3.4" height="3.2" fill="#8d8d8d"/><rect x="5.6" y="11" width="1.8" height="2.4" fill="#5f5f5f"/><path d="M0 14.8 L1.6 12.4 H11.4 L13 14.8 Z" fill="#4cb648"/><rect x="4.4" y="12.9" width="4.2" height="1.2" fill="#b8b8b8"/></svg>
<span class="t" style="left:121.4px;top:425px;font-size:10px;letter-spacing:-0.481px;color:#2a3f6f;">CALIFORNIA</span>
<svg class="abs" style="left:103px;top:445.1px" width="13" height="15" viewBox="0 0 13 15"><rect x="1.5" y="0.8" width="10.5" height="13.4" rx="1" fill="#5b93d3" stroke="#3a6fb0" stroke-width="0.7"/><rect x="3.3" y="2.6" width="7" height="3" fill="#dce9f8"/><path d="M3.3 8H10.3M3.3 10H10.3M3.3 12H8" stroke="#bcd4f0" stroke-width="0.8"/></svg>
<span class="t" style="left:121.4px;top:445.6px;font-size:10px;letter-spacing:-0.457px;color:#2a3f6f;">TEMPLATES</span>
<div class="abs" style="left:321px;top:39px;width:24px;height:28.5px;background:#dfdfdf;border-bottom-right-radius:9px"></div>
<svg class="abs" style="left:328px;top:46px" width="8" height="11" viewBox="0 0 8 11"><path d="M6.3 1.3 L1.8 5.5 L6.3 9.7" fill="none" stroke="#002d62" stroke-width="1.6"/></svg>
<div class="abs" style="left:353px;top:41px;width:100px;height:29px;background:#002d62;border-radius:2px 2px 0 0"></div>
<span class="t b" style="left:361.3px;top:48.5px;font-size:10px;letter-spacing:-0.441px;font-weight:bold;color:#fff;">SIL Determinations</span>
<div class="abs" style="left:456px;top:41px;width:60px;height:28px;background:#e2e2e2;border-radius:2px 2px 0 0"></div>
<span class="t" style="left:465.8px;top:48.5px;font-size:10px;letter-spacing:-0.183px;font-style:italic;color:#243d78;">Revisions</span>
<div class="abs" style="left:321px;top:69px;width:1079px;height:4px;background:#002d62"></div>
<div class="tb" style="left:327px;width:28px"></div>
<svg class="abs" style="left:333px;top:84px" width="15" height="15" viewBox="0 0 15 15"><defs><radialGradient id="gb" cx="0.5" cy="0.4" r="0.6"><stop offset="0" stop-color="#fffbe6"/><stop offset="0.55" stop-color="#fde9a0"/><stop offset="1" stop-color="#f6c45c"/></radialGradient></defs><path d="M5.3 9 H9.7 V12.4 Q7.5 14.2 5.3 12.4 Z" fill="#b9b39a" stroke="#8f8b7a" stroke-width="0.5"/><ellipse cx="7.5" cy="5.8" rx="6.4" ry="5" fill="url(#gb)" stroke="#f0b455" stroke-width="0.8"/><rect x="6.2" y="6" width="2.6" height="4.4" fill="#f3d23c"/></svg>
<div class="tb" style="left:359px;width:58px"></div>
<svg class="abs" style="left:366px;top:84px" width="17" height="16" viewBox="0 0 17 16"><defs><linearGradient id="gp" x1="0" y1="0" x2="0" y2="1"><stop offset="0" stop-color="#f2f2f2"/><stop offset="1" stop-color="#9c9c9c"/></linearGradient></defs><path d="M4.2 7 V1.6 H10 L12.8 4 V7 Z" fill="#b7d6f6" stroke="#5f9be2" stroke-width="0.8"/><rect x="1.2" y="6.6" width="14.6" height="6.4" rx="1.6" fill="url(#gp)" stroke="#707070" stroke-width="0.8"/><rect x="3.4" y="10" width="10.2" height="1" fill="#5a5a5a"/><path d="M4 11 H13 V14.6 H4 Z" fill="#f4f8fd" stroke="#5f9be2" stroke-width="0.8"/></svg>
<span class="t" style="left:388.6px;top:84px;font-size:10.3px;letter-spacing:-0.236px;color:#243d78;">Print</span>
<div class="tb" style="left:421px;width:116px"></div><div class="tbd" style="left:511px"></div>
<svg class="abs" style="left:428px;top:84px" width="15" height="16" viewBox="0 0 15 16"><defs><linearGradient id="gf" x1="0" y1="0" x2="0" y2="1"><stop offset="0" stop-color="#fdeab0"/><stop offset="1" stop-color="#f2b136"/></linearGradient></defs><path d="M5.6 0.8 H11.4 L13.8 3.2 V11 H5.6 Z" fill="#fdfdfd" stroke="#bdbdbd" stroke-width="0.7"/><path d="M1 5.6 H5.8 L6.8 7 H12.6 V14.6 H1 Z" fill="url(#gf)" stroke="#e39a2c" stroke-width="0.8"/></svg>
<span class="t" style="left:450.6px;top:84px;font-size:10.3px;letter-spacing:-0.313px;color:#3a3a3a;">1 Document</span>
<svg class="abs" style="left:520px;top:89.8px" width="7.2" height="5.4" viewBox="0 0 8 6"><path d="M0 0 H8 L4 6 Z" fill="#2a2a2a"/></svg>
<div class="tb" style="left:541px;width:115px"></div><div class="tbd" style="left:630.5px"></div>
<svg class="abs" style="left:549px;top:85px" width="13" height="14" viewBox="0 0 13 14"><path d="M4.5 2.5H12.5M4.5 7H12.5M4.5 11.5H12.5" stroke="#444" stroke-width="1"/><path d="M0.6 2.4 L1.6 3.5 L3.3 1.2 M0.6 6.9 L1.6 8 L3.3 5.7 M0.6 11.4 L1.6 12.5 L3.3 10.2" fill="none" stroke="#3fae49" stroke-width="1"/></svg>
<span class="t" style="left:570.2px;top:84px;font-size:10.3px;letter-spacing:-0.26px;color:#3a3a3a;">2 Checklists</span>
<svg class="abs" style="left:639.3px;top:89.8px" width="7.2" height="5.4" viewBox="0 0 8 6"><path d="M0 0 H8 L4 6 Z" fill="#2a2a2a"/></svg>
<div class="tb" style="left:660px;width:117px"></div><div class="tbd" style="left:752px"></div>
<svg class="abs" style="left:667px;top:84px" width="16" height="16" viewBox="0 0 16 16"><g fill="#f3f3f3" stroke="#a8a8a8" stroke-width="0.8"><rect x="6.3" y="1" width="3.4" height="14" rx="1.6"/><rect x="6.3" y="1" width="3.4" height="14" rx="1.6" transform="rotate(60 8 8)"/><rect x="6.3" y="1" width="3.4" height="14" rx="1.6" transform="rotate(-60 8 8)"/></g><circle cx="8" cy="8" r="2.2" fill="#f3f3f3"/></svg>
<span class="t" style="left:690px;top:84px;font-size:10.3px;letter-spacing:-0.181px;color:#3a3a3a;">Subscription</span>
<svg class="abs" style="left:761px;top:89.8px" width="7.2" height="5.4" viewBox="0 0 8 6"><path d="M0 0 H8 L4 6 Z" fill="#2a2a2a"/></svg>
<div class="tb" style="left:782px;width:66px"></div>
<svg class="abs" style="left:788px;top:84px" width="17" height="16" viewBox="0 0 17 16"><path d="M2.6 13.4 L14.4 2.6" stroke="#6d9be0" stroke-width="2.4" stroke-linecap="round"/><path d="M5 11.2 L12 4.8" stroke="#7fabeb" stroke-width="5" stroke-linecap="round"/><path d="M6.6 5.8 L10.6 10.2" stroke="#4db356" stroke-width="1.3"/></svg>
<span class="t" style="left:810.7px;top:84px;font-size:10.3px;letter-spacing:-0.726px;color:#243d78;">ERP ID</span>
<div class="tb" style="left:852px;width:117px"></div><div class="tbd" style="left:944px"></div>
<svg class="abs" style="left:859px;top:84px" width="16" height="16" viewBox="0 0 16 16"><path d="M2.6 13.6 L8.2 7.6" stroke="#86b0ee" stroke-width="3.6" stroke-linecap="round"/><path d="M8 7.8 Q6.6 4.8 8.8 2.8 Q10.4 1.4 12.4 2 L10.2 4.2 L11.6 5.8 L14 3.6 Q14.6 5.8 13 7.4 Q11 9.2 8 7.8Z" fill="#ececec" stroke="#9a9a9a" stroke-width="0.8"/></svg>
<span class="t" style="left:882px;top:84px;font-size:10.3px;letter-spacing:-0.174px;color:#3a3a3a;">Admin Tools</span>
<svg class="abs" style="left:953px;top:89.8px" width="7.2" height="5.4" viewBox="0 0 8 6"><path d="M0 0 H8 L4 6 Z" fill="#2a2a2a"/></svg>
<div class="tb" style="left:974px;width:109px"></div>
<svg class="abs" style="left:980px;top:84px" width="17" height="16" viewBox="0 0 17 16"><path d="M2.4 13.8 L8.6 7.8" stroke="#f2b83e" stroke-width="3.2" stroke-linecap="round"/><path d="M2.2 11.6 L4.6 14 M4.4 9.6 L6.6 11.8" stroke="#e8a52c" stroke-width="1.4"/><ellipse cx="11.2" cy="5.4" rx="4.6" ry="4.2" fill="#f8cb55" stroke="#e8a52c" stroke-width="0.8" transform="rotate(-40 11.2 5.4)"/><circle cx="12.6" cy="4" r="1.1" fill="#fdf0c0"/></svg>
<span class="t" style="left:1003px;top:84px;font-size:10.3px;letter-spacing:-0.393px;color:#243d78;">Create WebView</span>
<div class="tb" style="left:1086px;width:148px"></div><div class="tbd" style="left:1209px"></div>
<svg class="abs" style="left:1094px;top:85px" width="15" height="14" viewBox="0 0 15 14"><rect x="0.8" y="0.8" width="13.4" height="12.4" fill="#fff" stroke="#5b84c4" stroke-width="1"/><rect x="1.3" y="1.3" width="12.4" height="2.6" fill="#8fb4ea"/><rect x="2.8" y="5.4" width="3" height="6.4" fill="#6f9ee0"/><rect x="7" y="6.4" width="5.4" height="5.4" fill="#4cb648"/></svg>
<span class="t" style="left:1116px;top:84px;font-size:10.3px;letter-spacing:-0.208px;color:#3a3a3a;">Navigate to Module</span>
<svg class="abs" style="left:1217.5px;top:89.8px" width="7.2" height="5.4" viewBox="0 0 8 6"><path d="M0 0 H8 L4 6 Z" fill="#2a2a2a"/></svg>
<div class="abs" style="left:321px;top:110px;width:1079px;height:1px;background:#e6e6e6"></div>
<div class="abs" style="left:321px;top:137px;width:1079px;height:1px;background:#e2e2e2"></div>
<svg class="abs" style="left:320px;top:113px" width="410" height="23" viewBox="0 0 410 24" preserveAspectRatio="none">
<path d="M1 0 H230 L241.5 12 L230 24 H1 Z" fill="#e0e0e0"/>
<path d="M21 0 L32 12 L21 24 M90 0 L101.5 12 L90 24" fill="none" stroke="#fff" stroke-width="1.6"/>
<path d="M230 0 H390 L401 12 L390 24 H230 L241.5 12 Z" fill="#264579"/>
</svg>
<svg class="abs" style="left:325px;top:118px" width="15" height="14" viewBox="0 0 15 14"><path d="M7.5 1.2 L1 7 H2.8 V12.4 H12.2 V7 H14 Z" fill="#f2f2f2" stroke="#6b6b6b" stroke-width="0.9" stroke-linejoin="round"/><rect x="6" y="8" width="3" height="4.4" fill="#8a8a8a"/><path d="M0.5 13.3H14.5" stroke="#6b6b6b" stroke-width="0.8"/></svg>
<svg class="abs" style="left:357px;top:119px" width="16" height="12" viewBox="0 0 16 12"><path d="M3.8 10.4 Q0.9 10.4 0.9 8 Q0.9 5.9 3.2 5.6 Q3.7 2 7 2 Q9.7 2 10.6 4.5 Q14.4 4.5 14.4 7.6 Q14.4 10.4 11.4 10.4 Z" fill="#f4f4f4" stroke="#8a8a8a" stroke-width="1"/></svg>
<span class="t" style="left:381.5px;top:117.4px;font-size:10.3px;letter-spacing:-0.773px;color:#243d78;">MSS</span>
<svg class="abs" style="left:430px;top:117px" width="13" height="15" viewBox="0 0 13 15"><rect x="8.2" y="0.4" width="1.2" height="2.4" fill="#e25a5a"/><rect x="2.3" y="2.6" width="8.4" height="11" fill="#d3deec" stroke="#a9b4c4" stroke-width="0.7"/><rect x="3.4" y="3.8" width="6.2" height="5.4" fill="#b9cdea"/><path d="M3.4 5.6H9.6M3.4 7.4H9.6" stroke="#e4ecf7" stroke-width="0.6"/><rect x="4.8" y="10.2" width="3.4" height="3.2" fill="#8d8d8d"/><rect x="5.6" y="11" width="1.8" height="2.4" fill="#5f5f5f"/><path d="M0 14.8 L1.6 12.4 H11.4 L13 14.8 Z" fill="#4cb648"/><rect x="4.4" y="12.9" width="4.2" height="1.2" fill="#b8b8b8"/></svg>
<span class="t" style="left:452.2px;top:117.4px;font-size:10.3px;letter-spacing:-0.432px;color:#243d78;">04 - Long Beach, CA</span>
<svg class="abs" style="left:565.5px;top:117.2px" width="16" height="14" viewBox="0 0 16 14"><path d="M0.8 5 L8 2.2 L15.2 5 V10 L8 13.2 L0.8 10 Z" fill="#efefef" stroke="#c9c9c9" stroke-width="1" stroke-linejoin="round"/><path d="M8 7.8 V13.2 L15.2 10 V5 Z" fill="#dcdcdc" stroke="#c9c9c9" stroke-width="0.5"/><path d="M0.8 5 L8 2.2 L15.2 5 L8 7.8 Z" fill="#ffffff" stroke="#c9c9c9" stroke-width="0.6"/><path d="M6 2.3 V3.4 A2 1 0 0 0 10 3.4 V2.3 Z" fill="#efefef" stroke="#c9c9c9" stroke-width="0.7"/><ellipse cx="8" cy="2.3" rx="2" ry="1" fill="#ffffff" stroke="#c9c9c9" stroke-width="0.7"/><path d="M2.5999999999999996 3.7 V4.800000000000001 A2 1 0 0 0 6.6 4.800000000000001 V3.7 Z" fill="#efefef" stroke="#c9c9c9" stroke-width="0.7"/><ellipse cx="4.6" cy="3.7" rx="2" ry="1" fill="#ffffff" stroke="#c9c9c9" stroke-width="0.7"/><path d="M9.4 3.7 V4.800000000000001 A2 1 0 0 0 13.4 4.800000000000001 V3.7 Z" fill="#efefef" stroke="#c9c9c9" stroke-width="0.7"/><ellipse cx="11.4" cy="3.7" rx="2" ry="1" fill="#ffffff" stroke="#c9c9c9" stroke-width="0.7"/><path d="M6 5.3 V6.4 A2 1 0 0 0 10 6.4 V5.3 Z" fill="#efefef" stroke="#c9c9c9" stroke-width="0.7"/><ellipse cx="8" cy="5.3" rx="2" ry="1" fill="#ffffff" stroke="#c9c9c9" stroke-width="0.7"/></svg>
<span class="t b" style="left:589.8px;top:117.4px;font-size:10.3px;letter-spacing:-0.613px;font-weight:bold;color:#fff;">01-GASSTAB1: 1-Gasoli...</span>
<div class="abs" style="left:330px;top:148px;width:1068.5px;height:569px;border:1px solid #d9d9d9;background:#fff"></div>
<div class="abs" style="left:330.3px;top:148px;width:1068px;height:46px;background:#002d62"></div>
<svg class="abs" style="left:343.5px;top:165.5px" width="12" height="13" viewBox="0 0 13 14"><path d="M0.5 1 H12.5 L7.9 6.8 V13 L5.1 11.2 V6.8 Z" fill="#fff"/></svg>
<svg class="abs" style="left:366px;top:165px" width="14.5" height="13.5" viewBox="0 0 16 15"><path d="M1.2 4 V1.2 H4 M6.5 1.2 H9 V4 M9 10.5 V13.4 H6.5 M4 13.4 H1.2 V10.5" fill="none" stroke="#fff" stroke-width="1.5"/><rect x="4.2" y="6" width="2" height="2.6" fill="#fff"/><rect x="11.3" y="0.5" width="2.6" height="13.6" fill="#fff"/></svg>
<div class="abs" style="left:391px;top:158px;width:1px;height:28px;background:#8a97b3"></div>
<span class="t b" style="left:404.9px;top:164px;font-size:10px;letter-spacing:-0.453px;font-weight:bold;color:#fff;">SIL Assessment within 01-GASSTAB1: 1-Gasoline Stabilizer</span>
<div class="abs" style="left:1242px;top:157.6px;width:129px;height:27px;background:#e1e1e1;border:1px solid #cfcfcf;border-radius:2px"></div>
<svg class="abs" style="left:1251px;top:164.4px" width="13" height="13" viewBox="0 0 13 13"><circle cx="6.5" cy="6.5" r="6" fill="#7ccb76" stroke="#58b255" stroke-width="0.9"/><circle cx="6.5" cy="6.5" r="3.6" fill="#a5dca0"/><path d="M6.5 3.9V9.1M3.9 6.5H9.1" stroke="#ffffff" stroke-width="1.7"/></svg>
<span class="t" style="left:1272.6px;top:162.9px;font-size:10.3px;letter-spacing:-0.259px;color:#2b3f6e;">Add SIL Assessment</span>
<div class="abs" style="left:331px;top:195px;width:1066.5px;height:37px;background:#f7f7f7;border-bottom:1px solid #dcdcdc"></div>
<div class="abs" style="left:358px;top:195px;width:1px;height:36px;background:#dedede"></div>
<div class="abs" style="left:557px;top:195px;width:1px;height:36px;background:#dedede"></div>
<div class="abs" style="left:755px;top:195px;width:1px;height:36px;background:#dedede"></div>
<div class="abs" style="left:1390px;top:195px;width:1px;height:36px;background:#dedede"></div>
<span class="t" style="left:369.7px;top:205px;font-size:10.3px;letter-spacing:-0.259px;color:#3f4f7a;">SIL Assessment ID (</span>
<span class="t b" style="left:459.5px;top:205.5px;font-size:10.3px;font-weight:bold;color:#e02020;">*</span>
<span class="t" style="left:466px;top:205px;font-size:10.3px;color:#3f4f7a;">)</span>
<span class="t" style="left:568px;top:205px;font-size:10.3px;letter-spacing:-0.274px;color:#3f4f7a;">Assessment Date</span>
<span class="t" style="left:649.3px;top:205px;font-size:10px;color:#7f9fd6;">‡</span>
<span class="t" style="left:766.3px;top:205px;font-size:10.3px;letter-spacing:-0.182px;color:#3f4f7a;">Determination Results</span>
<div class="abs" style="left:539.5px;top:207px;width:2px;height:2px;border-radius:1px;background:#222"></div><div class="abs" style="left:539.5px;top:211.2px;width:2px;height:2px;border-radius:1px;background:#222"></div><div class="abs" style="left:539.5px;top:215.4px;width:2px;height:2px;border-radius:1px;background:#222"></div>
<div class="abs" style="left:737.5px;top:207px;width:2px;height:2px;border-radius:1px;background:#222"></div><div class="abs" style="left:737.5px;top:211.2px;width:2px;height:2px;border-radius:1px;background:#222"></div><div class="abs" style="left:737.5px;top:215.4px;width:2px;height:2px;border-radius:1px;background:#222"></div>
<div class="abs" style="left:1373px;top:207px;width:2px;height:2px;border-radius:1px;background:#222"></div><div class="abs" style="left:1373px;top:211.2px;width:2px;height:2px;border-radius:1px;background:#222"></div><div class="abs" style="left:1373px;top:215.4px;width:2px;height:2px;border-radius:1px;background:#222"></div>
<div class="abs" style="left:331px;top:232px;width:1057.5px;height:88px;background:#fff;border-bottom:1px solid #dcdcdc"></div>
<div class="abs" style="left:334px;top:262.3px;width:22px;height:22.5px;background:#e0e0e0;border:1px solid #cccccc;border-radius:2px"></div>
<svg class="abs" style="left:338px;top:266.5px" width="14" height="14" viewBox="0 0 14 14"><circle cx="7" cy="7" r="5.9" fill="#e9605a" stroke="#d4514b" stroke-width="0.7"/><ellipse cx="7" cy="4.4" rx="4.2" ry="2.6" fill="#f4978f" opacity="0.85"/><rect x="3.8" y="6" width="6.4" height="2" rx="0.6" fill="#fff"/></svg>
<span class="t b" style="left:368.7px;top:267.5px;font-size:10.3px;letter-spacing:-0.531px;font-weight:bold;color:#1d2f5f;border-bottom:1px solid #1d2f5f;height:13.4px;line-height:15px;top:267.2px;">GASSTAB1-REVALIDATION-2017</span>
<div class="abs" style="left:765px;top:239px;width:612.6px;height:31px;background:#f6f6f6;border:1px solid #dadada"></div>
<div class="abs" style="left:765.4px;top:270px;width:86.6px;height:37.2px;background:#7cc576"></div>
<span class="t" style="left:779.4px;top:246.4px;font-size:10px;letter-spacing:-0.469px;color:#3f4f7a;">NR</span>
<span class="t b" style="left:776.5px;top:280px;font-size:10px;font-weight:bold;color:#fff;">1</span>
<div class="abs" style="left:852px;top:239px;width:1px;height:68px;background:#dcdcdc"></div>
<div class="abs" style="left:853px;top:270px;width:87px;height:37.2px;background:#ffffcc"></div>
<span class="t" style="left:866.9px;top:246.4px;font-size:10px;letter-spacing:-0.457px;color:#3f4f7a;">NSR</span>
<span class="t b" style="left:864.0px;top:280px;font-size:10px;font-weight:bold;color:#1a1a1a;">2</span>
<div class="abs" style="left:940px;top:239px;width:1px;height:68px;background:#dcdcdc"></div>
<div class="abs" style="left:941px;top:270px;width:86px;height:37.2px;background:#ffff00"></div>
<span class="t" style="left:954.3px;top:246.4px;font-size:10px;letter-spacing:-0.265px;color:#3f4f7a;">IL 1</span>
<span class="t b" style="left:951.4px;top:280px;font-size:10px;font-weight:bold;color:#1a1a1a;">0</span>
<div class="abs" style="left:1027px;top:239px;width:1px;height:68px;background:#dcdcdc"></div>
<div class="abs" style="left:1028px;top:270px;width:87px;height:37.2px;background:#ffc000"></div>
<span class="t" style="left:1041.8px;top:246.4px;font-size:10px;letter-spacing:-0.265px;color:#3f4f7a;">IL 2</span>
<span class="t b" style="left:1038.9px;top:280px;font-size:10px;font-weight:bold;color:#1a1a1a;">1</span>
<div class="abs" style="left:1115px;top:239px;width:1px;height:68px;background:#dcdcdc"></div>
<div class="abs" style="left:1116px;top:270px;width:86px;height:37.2px;background:#ff0000"></div>
<span class="t" style="left:1129.3px;top:246.4px;font-size:10px;letter-spacing:-0.265px;color:#3f4f7a;">IL 3</span>
<span class="t b" style="left:1126.4px;top:280px;font-size:10px;font-weight:bold;color:#470000;">0</span>
<div class="abs" style="left:1202px;top:239px;width:1px;height:68px;background:#dcdcdc"></div>
<div class="abs" style="left:1203px;top:270px;width:87px;height:37.2px;background:#c00000"></div>
<span class="t" style="left:1216.8px;top:246.4px;font-size:10px;letter-spacing:-0.265px;color:#3f4f7a;">IL 4</span>
<span class="t b" style="left:1213.9px;top:280px;font-size:10px;font-weight:bold;color:#fff;">0</span>
<div class="abs" style="left:1290px;top:239px;width:1px;height:68px;background:#dcdcdc"></div>
<div class="abs" style="left:1291px;top:270px;width:86.2px;height:37.2px;background:#800000"></div>
<span class="t" style="left:1304.2px;top:246.4px;font-size:10px;letter-spacing:-0.361px;color:#3f4f7a;">INS</span>
<span class="t b" style="left:1301.3px;top:280px;font-size:10px;font-weight:bold;color:#fff;">0</span>
<div class="abs" style="left:765px;top:307px;width:612.6px;height:1px;background:#d6d6d6;opacity:.6"></div>
<div class="abs" style="left:331px;top:320px;width:1057.5px;height:88.30000000000001px;background:#f7f7f7;border-bottom:1px solid #dcdcdc"></div>
<div class="abs" style="left:334px;top:350.45px;width:22px;height:22.5px;background:#e0e0e0;border:1px solid #cccccc;border-radius:2px"></div>
<svg class="abs" style="left:338px;top:354.65px" width="14" height="14" viewBox="0 0 14 14"><circle cx="7" cy="7" r="5.9" fill="#e9605a" stroke="#d4514b" stroke-width="0.7"/><ellipse cx="7" cy="4.4" rx="4.2" ry="2.6" fill="#f4978f" opacity="0.85"/><rect x="3.8" y="6" width="6.4" height="2" rx="0.6" fill="#fff"/></svg>
<span class="t b" style="left:368.7px;top:355.65px;font-size:10.3px;letter-spacing:-0.273px;font-weight:bold;color:#1d2f5f;border-bottom:1px solid #1d2f5f;height:13.4px;line-height:15px;top:355.34999999999997px;">HAZOP-112619</span>
<div class="abs" style="left:765px;top:327px;width:612.6px;height:31px;background:#f6f6f6;border:1px solid #dadada"></div>
<div class="abs" style="left:765.4px;top:358px;width:86.6px;height:37.2px;background:#7cc576"></div>
<span class="t" style="left:779.4px;top:334.4px;font-size:10px;letter-spacing:-0.469px;color:#3f4f7a;">NR</span>
<span class="t b" style="left:776.5px;top:368px;font-size:10px;font-weight:bold;color:#fff;">0</span>
<div class="abs" style="left:852px;top:327px;width:1px;height:68px;background:#dcdcdc"></div>
<div class="abs" style="left:853px;top:358px;width:87px;height:37.2px;background:#ffffcc"></div>
<span class="t" style="left:866.9px;top:334.4px;font-size:10px;letter-spacing:-0.457px;color:#3f4f7a;">NSR</span>
<span class="t b" style="left:864.0px;top:368px;font-size:10px;font-weight:bold;color:#1a1a1a;">0</span>
<div class="abs" style="left:940px;top:327px;width:1px;height:68px;background:#dcdcdc"></div>
<div class="abs" style="left:941px;top:358px;width:86px;height:37.2px;background:#ffff00"></div>
<span class="t" style="left:954.3px;top:334.4px;font-size:10px;letter-spacing:-0.265px;color:#3f4f7a;">IL 1</span>
<span class="t b" style="left:951.4px;top:368px;font-size:10px;font-weight:bold;color:#1a1a1a;">0</span>
<div class="abs" style="left:1027px;top:327px;width:1px;height:68px;background:#dcdcdc"></div>
<div class="abs" style="left:1028px;top:358px;width:87px;height:37.2px;background:#ffc000"></div>
<span class="t" style="left:1041.8px;top:334.4px;font-size:10px;letter-spacing:-0.265px;color:#3f4f7a;">IL 2</span>
<span class="t b" style="left:1038.9px;top:368px;font-size:10px;font-weight:bold;color:#1a1a1a;">0</span>
<div class="abs" style="left:1115px;top:327px;width:1px;height:68px;background:#dcdcdc"></div>
<div class="abs" style="left:1116px;top:358px;width:86px;height:37.2px;background:#ff0000"></div>
<span class="t" style="left:1129.3px;top:334.4px;font-size:10px;letter-spacing:-0.265px;color:#3f4f7a;">IL 3</span>
<span class="t b" style="left:1126.4px;top:368px;font-size:10px;font-weight:bold;color:#470000;">0</span>
<div class="abs" style="left:1202px;top:327px;width:1px;height:68px;background:#dcdcdc"></div>
<div class="abs" style="left:1203px;top:358px;width:87px;height:37.2px;background:#c00000"></div>
<span class="t" style="left:1216.8px;top:334.4px;font-size:10px;letter-spacing:-0.265px;color:#3f4f7a;">IL 4</span>
<span class="t b" style="left:1213.9px;top:368px;font-size:10px;font-weight:bold;color:#fff;">0</span>
<div class="abs" style="left:1290px;top:327px;width:1px;height:68px;background:#dcdcdc"></div>
<div class="abs" style="left:1291px;top:358px;width:86.2px;height:37.2px;background:#800000"></div>
<span class="t" style="left:1304.2px;top:334.4px;font-size:10px;letter-spacing:-0.361px;color:#3f4f7a;">INS</span>
<span class="t b" style="left:1301.3px;top:368px;font-size:10px;font-weight:bold;color:#fff;">0</span>
<div class="abs" style="left:765px;top:395px;width:612.6px;height:1px;background:#d6d6d6;opacity:.6"></div>
<div class="abs" style="left:331px;top:408.3px;width:1057.5px;height:88.0px;background:#fff;border-bottom:1px solid #dcdcdc"></div>
<div class="abs" style="left:334px;top:438.6px;width:22px;height:22.5px;background:#e0e0e0;border:1px solid #cccccc;border-radius:2px"></div>
<svg class="abs" style="left:338px;top:442.8px" width="14" height="14" viewBox="0 0 14 14"><circle cx="7" cy="7" r="5.9" fill="#e9605a" stroke="#d4514b" stroke-width="0.7"/><ellipse cx="7" cy="4.4" rx="4.2" ry="2.6" fill="#f4978f" opacity="0.85"/><rect x="3.8" y="6" width="6.4" height="2" rx="0.6" fill="#fff"/></svg>
<span class="t b" style="left:368.7px;top:443.8px;font-size:10.3px;letter-spacing:-0.667px;font-weight:bold;color:#1d2f5f;border-bottom:1px solid #1d2f5f;height:13.4px;line-height:15px;top:443.5px;">ADDITIONAL-FEED-PUMP-PROJECT</span>
<div class="abs" style="left:765px;top:415.3px;width:612.6px;height:31px;background:#f6f6f6;border:1px solid #dadada"></div>
<div class="abs" style="left:765.4px;top:446.3px;width:86.6px;height:37.2px;background:#7cc576"></div>
<span class="t" style="left:779.4px;top:422.7px;font-size:10px;letter-spacing:-0.469px;color:#3f4f7a;">NR</span>
<span class="t b" style="left:776.5px;top:456.3px;font-size:10px;font-weight:bold;color:#fff;">0</span>
<div class="abs" style="left:852px;top:415.3px;width:1px;height:68px;background:#dcdcdc"></div>
<div class="abs" style="left:853px;top:446.3px;width:87px;height:37.2px;background:#ffffcc"></div>
<span class="t" style="left:866.9px;top:422.7px;font-size:10px;letter-spacing:-0.457px;color:#3f4f7a;">NSR</span>
<span class="t b" style="left:864.0px;top:456.3px;font-size:10px;font-weight:bold;color:#1a1a1a;">0</span>
<div class="abs" style="left:940px;top:415.3px;width:1px;height:68px;background:#dcdcdc"></div>
<div class="abs" style="left:941px;top:446.3px;width:86px;height:37.2px;background:#ffff00"></div>
<span class="t" style="left:954.3px;top:422.7px;font-size:10px;letter-spacing:-0.265px;color:#3f4f7a;">IL 1</span>
<span class="t b" style="left:951.4px;top:456.3px;font-size:10px;font-weight:bold;color:#1a1a1a;">0</span>
<div class="abs" style="left:1027px;top:415.3px;width:1px;height:68px;background:#dcdcdc"></div>
<div class="abs" style="left:1028px;top:446.3px;width:87px;height:37.2px;background:#ffc000"></div>
<span class="t" style="left:1041.8px;top:422.7px;font-size:10px;letter-spacing:-0.265px;color:#3f4f7a;">IL 2</span>
<span class="t b" style="left:1038.9px;top:456.3px;font-size:10px;font-weight:bold;color:#1a1a1a;">0</span>
<div class="abs" style="left:1115px;top:415.3px;width:1px;height:68px;background:#dcdcdc"></div>
<div class="abs" style="left:1116px;top:446.3px;width:86px;height:37.2px;background:#ff0000"></div>
<span class="t" style="left:1129.3px;top:422.7px;font-size:10px;letter-spacing:-0.265px;color:#3f4f7a;">IL 3</span>
<span class="t b" style="left:1126.4px;top:456.3px;font-size:10px;font-weight:bold;color:#470000;">0</span>
<div class="abs" style="left:1202px;top:415.3px;width:1px;height:68px;background:#dcdcdc"></div>
<div class="abs" style="left:1203px;top:446.3px;width:87px;height:37.2px;background:#c00000"></div>
<span class="t" style="left:1216.8px;top:422.7px;font-size:10px;letter-spacing:-0.265px;color:#3f4f7a;">IL 4</span>
<span class="t b" style="left:1213.9px;top:456.3px;font-size:10px;font-weight:bold;color:#fff;">0</span>
<div class="abs" style="left:1290px;top:415.3px;width:1px;height:68px;background:#dcdcdc"></div>
<div class="abs" style="left:1291px;top:446.3px;width:86.2px;height:37.2px;background:#800000"></div>
<span class="t" style="left:1304.2px;top:422.7px;font-size:10px;letter-spacing:-0.361px;color:#3f4f7a;">INS</span>
<span class="t b" style="left:1301.3px;top:456.3px;font-size:10px;font-weight:bold;color:#fff;">0</span>
<div class="abs" style="left:765px;top:483.3px;width:612.6px;height:1px;background:#d6d6d6;opacity:.6"></div>
<div class="abs" style="left:331px;top:496.3px;width:1057.5px;height:88.49999999999994px;background:#f7f7f7;border-bottom:1px solid #dcdcdc"></div>
<div class="abs" style="left:334px;top:526.8499999999999px;width:22px;height:22.5px;background:#e0e0e0;border:1px solid #cccccc;border-radius:2px"></div>
<svg class="abs" style="left:338px;top:531.05px" width="14" height="14" viewBox="0 0 14 14"><circle cx="7" cy="7" r="5.9" fill="#e9605a" stroke="#d4514b" stroke-width="0.7"/><ellipse cx="7" cy="4.4" rx="4.2" ry="2.6" fill="#f4978f" opacity="0.85"/><rect x="3.8" y="6" width="6.4" height="2" rx="0.6" fill="#fff"/></svg>
<span class="t b" style="left:368.7px;top:532.05px;font-size:10.3px;letter-spacing:-0.968px;font-weight:bold;color:#1d2f5f;border-bottom:1px solid #1d2f5f;height:13.4px;line-height:15px;top:531.75px;">DOUBLE-EAGLE-1</span>
<div class="abs" style="left:765px;top:503.3px;width:612.6px;height:31px;background:#f6f6f6;border:1px solid #dadada"></div>
<div class="abs" style="left:765.4px;top:534.3px;width:86.6px;height:37.2px;background:#7cc576"></div>
<span class="t" style="left:779.4px;top:510.7px;font-size:10px;letter-spacing:-0.469px;color:#3f4f7a;">NR</span>
<span class="t b" style="left:776.5px;top:544.3px;font-size:10px;font-weight:bold;color:#fff;">0</span>
<div class="abs" style="left:852px;top:503.3px;width:1px;height:68px;background:#dcdcdc"></div>
<div class="abs" style="left:853px;top:534.3px;width:87px;height:37.2px;background:#ffffcc"></div>
<span class="t" style="left:866.9px;top:510.7px;font-size:10px;letter-spacing:-0.457px;color:#3f4f7a;">NSR</span>
<span class="t b" style="left:864.0px;top:544.3px;font-size:10px;font-weight:bold;color:#1a1a1a;">0</span>
<div class="abs" style="left:940px;top:503.3px;width:1px;height:68px;background:#dcdcdc"></div>
<div class="abs" style="left:941px;top:534.3px;width:86px;height:37.2px;background:#ffff00"></div>
<span class="t" style="left:954.3px;top:510.7px;font-size:10px;letter-spacing:-0.265px;color:#3f4f7a;">IL 1</span>
<span class="t b" style="left:951.4px;top:544.3px;font-size:10px;font-weight:bold;color:#1a1a1a;">0</span>
<div class="abs" style="left:1027px;top:503.3px;width:1px;height:68px;background:#dcdcdc"></div>
<div class="abs" style="left:1028px;top:534.3px;width:87px;height:37.2px;background:#ffc000"></div>
<span class="t" style="left:1041.8px;top:510.7px;font-size:10px;letter-spacing:-0.265px;color:#3f4f7a;">IL 2</span>
<span class="t b" style="left:1038.9px;top:544.3px;font-size:10px;font-weight:bold;color:#1a1a1a;">0</span>
<div class="abs" style="left:1115px;top:503.3px;width:1px;height:68px;background:#dcdcdc"></div>
<div class="abs" style="left:1116px;top:534.3px;width:86px;height:37.2px;background:#ff0000"></div>
<span class="t" style="left:1129.3px;top:510.7px;font-size:10px;letter-spacing:-0.265px;color:#3f4f7a;">IL 3</span>
<span class="t b" style="left:1126.4px;top:544.3px;font-size:10px;font-weight:bold;color:#470000;">0</span>
<div class="abs" style="left:1202px;top:503.3px;width:1px;height:68px;background:#dcdcdc"></div>
<div class="abs" style="left:1203px;top:534.3px;width:87px;height:37.2px;background:#c00000"></div>
<span class="t" style="left:1216.8px;top:510.7px;font-size:10px;letter-spacing:-0.265px;color:#3f4f7a;">IL 4</span>
<span class="t b" style="left:1213.9px;top:544.3px;font-size:10px;font-weight:bold;color:#fff;">0</span>
<div class="abs" style="left:1290px;top:503.3px;width:1px;height:68px;background:#dcdcdc"></div>
<div class="abs" style="left:1291px;top:534.3px;width:86.2px;height:37.2px;background:#800000"></div>
<span class="t" style="left:1304.2px;top:510.7px;font-size:10px;letter-spacing:-0.361px;color:#3f4f7a;">INS</span>
<span class="t b" style="left:1301.3px;top:544.3px;font-size:10px;font-weight:bold;color:#fff;">0</span>
<div class="abs" style="left:765px;top:571.3px;width:612.6px;height:1px;background:#d6d6d6;opacity:.6"></div>
<div class="abs" style="left:331px;top:584.8px;width:1057.5px;height:87.20000000000005px;background:#fff;border-bottom:1px solid #dcdcdc"></div>
<div class="abs" style="left:334px;top:614.6999999999999px;width:22px;height:22.5px;background:#e0e0e0;border:1px solid #cccccc;border-radius:2px"></div>
<svg class="abs" style="left:338px;top:618.9px" width="14" height="14" viewBox="0 0 14 14"><circle cx="7" cy="7" r="5.9" fill="#e9605a" stroke="#d4514b" stroke-width="0.7"/><ellipse cx="7" cy="4.4" rx="4.2" ry="2.6" fill="#f4978f" opacity="0.85"/><rect x="3.8" y="6" width="6.4" height="2" rx="0.6" fill="#fff"/></svg>
<span class="t b" style="left:368.7px;top:619.9px;font-size:10.3px;letter-spacing:-0.573px;font-weight:bold;color:#1d2f5f;border-bottom:1px solid #1d2f5f;height:13.4px;line-height:15px;top:619.6px;">BEV-HIL-REF-HAZOP_SCENARIO-0222</span>
<span class="t b" style="left:566.8px;top:619.9px;font-size:10.3px;letter-spacing:-0.096px;font-weight:bold;color:#1d2f5f;">May-21-2020</span>
<div class="abs" style="left:765px;top:591.8px;width:612.6px;height:31px;background:#f6f6f6;border:1px solid #dadada"></div>
<div class="abs" style="left:765.4px;top:622.8px;width:86.6px;height:37.2px;background:#7cc576"></div>
<span class="t" style="left:779.4px;top:599.2px;font-size:10px;letter-spacing:-0.469px;color:#3f4f7a;">NR</span>
<span class="t b" style="left:776.5px;top:632.8px;font-size:10px;font-weight:bold;color:#fff;">1</span>
<div class="abs" style="left:852px;top:591.8px;width:1px;height:68px;background:#dcdcdc"></div>
<div class="abs" style="left:853px;top:622.8px;width:87px;height:37.2px;background:#ffffcc"></div>
<span class="t" style="left:866.9px;top:599.2px;font-size:10px;letter-spacing:-0.457px;color:#3f4f7a;">NSR</span>
<span class="t b" style="left:864.0px;top:632.8px;font-size:10px;font-weight:bold;color:#1a1a1a;">2</span>
<div class="abs" style="left:940px;top:591.8px;width:1px;height:68px;background:#dcdcdc"></div>
<div class="abs" style="left:941px;top:622.8px;width:86px;height:37.2px;background:#ffff00"></div>
<span class="t" style="left:954.3px;top:599.2px;font-size:10px;letter-spacing:-0.265px;color:#3f4f7a;">IL 1</span>
<span class="t b" style="left:951.4px;top:632.8px;font-size:10px;font-weight:bold;color:#1a1a1a;">3</span>
<div class="abs" style="left:1027px;top:591.8px;width:1px;height:68px;background:#dcdcdc"></div>
<div class="abs" style="left:1028px;top:622.8px;width:87px;height:37.2px;background:#ffc000"></div>
<span class="t" style="left:1041.8px;top:599.2px;font-size:10px;letter-spacing:-0.265px;color:#3f4f7a;">IL 2</span>
<span class="t b" style="left:1038.9px;top:632.8px;font-size:10px;font-weight:bold;color:#1a1a1a;">3</span>
<div class="abs" style="left:1115px;top:591.8px;width:1px;height:68px;background:#dcdcdc"></div>
<div class="abs" style="left:1116px;top:622.8px;width:86px;height:37.2px;background:#ff0000"></div>
<span class="t" style="left:1129.3px;top:599.2px;font-size:10px;letter-spacing:-0.265px;color:#3f4f7a;">IL 3</span>
<span class="t b" style="left:1126.4px;top:632.8px;font-size:10px;font-weight:bold;color:#470000;">1</span>
<div class="abs" style="left:1202px;top:591.8px;width:1px;height:68px;background:#dcdcdc"></div>
<div class="abs" style="left:1203px;top:622.8px;width:87px;height:37.2px;background:#c00000"></div>
<span class="t" style="left:1216.8px;top:599.2px;font-size:10px;letter-spacing:-0.265px;color:#3f4f7a;">IL 4</span>
<span class="t b" style="left:1213.9px;top:632.8px;font-size:10px;font-weight:bold;color:#fff;">0</span>
<div class="abs" style="left:1290px;top:591.8px;width:1px;height:68px;background:#dcdcdc"></div>
<div class="abs" style="left:1291px;top:622.8px;width:86.2px;height:37.2px;background:#800000"></div>
<span class="t" style="left:1304.2px;top:599.2px;font-size:10px;letter-spacing:-0.361px;color:#3f4f7a;">INS</span>
<span class="t b" style="left:1301.3px;top:632.8px;font-size:10px;font-weight:bold;color:#fff;">0</span>
<div class="abs" style="left:765px;top:659.8px;width:612.6px;height:1px;background:#d6d6d6;opacity:.6"></div>
<div class="abs" style="left:331px;top:672px;width:1066.5px;height:44px;background:#f6f6f6"></div>
<svg class="abs" style="left:346px;top:690.2px" width="9.2" height="8.4" viewBox="0 0 9 8"><rect x="0.3" y="0.5" width="1.6" height="7" fill="#9aa3ba"/><path d="M8.4 0.5 V7.5 L2.6 4 Z" fill="#9aa3ba"/></svg>
<svg class="abs" style="left:381px;top:690.2px" width="7.2" height="8.4" viewBox="0 0 7 8"><path d="M6.4 0.5 V7.5 L0.6 4 Z" fill="#9aa3ba"/></svg>
<div class="abs" style="left:404.4px;top:681px;width:22.8px;height:26px;background:#cdd2df;border-radius:2px"></div>
<span class="t" style="left:413.6px;top:687px;font-size:10.3px;color:#1d2f5f;">1</span>
<span class="t" style="left:437.6px;top:687px;font-size:10.3px;color:#1d2f5f;">2</span>
<svg class="abs" style="left:461.7px;top:690.2px" width="7.4" height="8.4" viewBox="0 0 7 8"><path d="M0.6 0.5 V7.5 L6.4 4 Z" fill="#1d2f5f"/></svg>
<svg class="abs" style="left:492px;top:690.2px" width="9.4" height="8.4" viewBox="0 0 9 8"><rect x="7.1" y="0.5" width="1.6" height="7" fill="#1d2f5f"/><path d="M0.6 0.5 V7.5 L6.4 4 Z" fill="#1d2f5f"/></svg>
<div class="abs" style="left:529.7px;top:680px;width:53.6px;height:27px;background:#fff;border:1px solid #d4d4d4;border-radius:2px"></div>
<div class="abs" style="left:557.6px;top:681px;width:1px;height:25px;background:#d4d4d4"></div>
<span class="t" style="left:538.3px;top:687px;font-size:10.3px;color:#1d2f5f;">5</span>
<div class="abs" style="left:566.8px;top:691.5px;width:0;height:0;border-left:3.9px solid transparent;border-right:3.9px solid transparent;border-top:5.5px solid #1d2f5f"></div>
<span class="t b" style="left:588.8px;top:687px;font-size:10.3px;letter-spacing:-0.507px;font-weight:bold;color:#1d2f5f;">items per page</span>
<span class="t b" style="left:1278.8px;top:687px;font-size:10.3px;letter-spacing:-0.322px;font-weight:bold;color:#1d2f5f;">1 - 5 of 6 items</span>
<svg class="abs" style="left:1363px;top:687px" width="16" height="16" viewBox="0 0 16 16"><path d="M12.9 6.5 A5.2 5.2 0 1 1 7.6 3.1" fill="none" stroke="#10296a" stroke-width="1.5"/><path d="M7.4 0.3 L12 2.8 L7.4 5.4 Z" fill="#10296a"/></svg>
<div class="abs" style="left:0;top:0;width:1.6px;height:719px;background:#fff"></div>
</div>
</body></html>
